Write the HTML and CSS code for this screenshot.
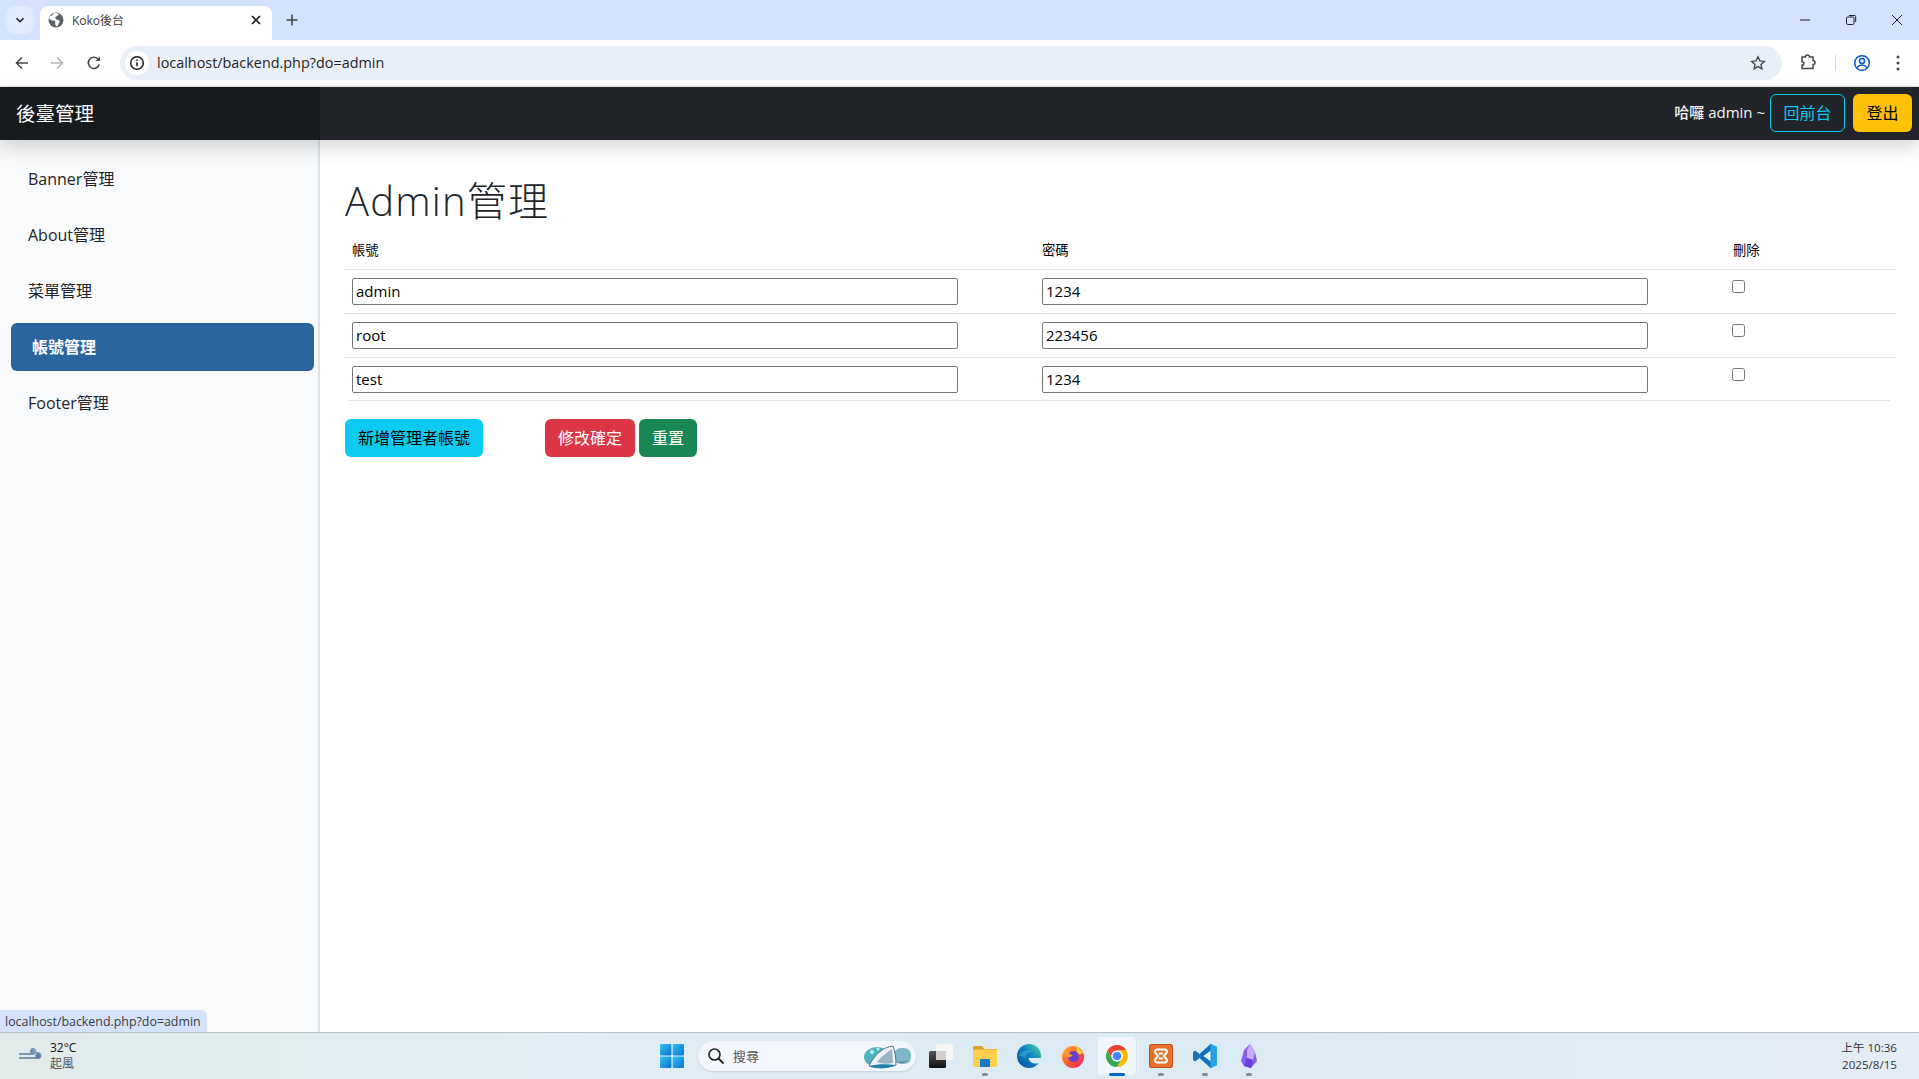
FILE: index.html
```html
<!DOCTYPE html>
<html lang="zh-Hant">
<head>
<meta charset="utf-8">
<title>Koko後台</title>
<link rel="stylesheet" href="styles.css">
</head>
<body>
<div class="window">
  <div class="tabstrip">
    <div class="tablist-btn"><svg width="12" height="12" viewBox="0 0 12 12"><path d="M2.5 4.2 6 7.7l3.5-3.5" fill="none" stroke="#1f1f1f" stroke-width="1.6"/></svg></div>
    <div class="tab">
      <svg class="favicon" width="16" height="16" viewBox="0 0 16 16"><circle cx="8" cy="8" r="7.5" fill="#5f6368"/><path d="M6 1 4 3.500l-2 .5L1 6.500l3 2h2.500l1 1.500-.5 2 1.500 2.500 1.500-1 .5-2 1.500-1.500-1.500-2-2.500-.5L7 5.500 9 4l2-1.500C9.500 1 7.500.7 6 1z" fill="#fff"/></svg>
      <span class="tab-title">Koko後台</span>
      <svg class="tab-close" width="12" height="12" viewBox="0 0 12 12"><path d="M2 2l8 8M10 2l-8 8" stroke="#1f1f1f" stroke-width="1.700"/></svg>
    </div>
    <svg class="newtab" width="14" height="14" viewBox="0 0 14 14"><path d="M7 1.500v11M1.500 7h11" stroke="#444746" stroke-width="1.600"/></svg>
    <div class="winctl">
      <svg width="14" height="14" viewBox="0 0 14 14"><path d="M2 7h10" stroke="#1f1f1f" stroke-width="1"/></svg>
      <svg width="14" height="14" viewBox="0 0 14 14"><rect x="2.500" y="4" width="7.500" height="7.500" rx="1.200" fill="none" stroke="#1f1f1f"/><path d="M5 2.500h5.500a1.200 1.200 0 0 1 1.200 1.200V9" fill="none" stroke="#1f1f1f"/></svg>
      <svg width="14" height="14" viewBox="0 0 14 14"><path d="M2 2l10 10M12 2 2 12" stroke="#1f1f1f" stroke-width="1"/></svg>
    </div>
  </div>
  <div class="toolbar">
    <svg class="tb-back" width="16" height="16" viewBox="0 0 16 16"><path d="M14 8H2.500M8 2.500 2.500 8 8 13.500" fill="none" stroke="#474747" stroke-width="1.600"/></svg>
    <svg class="tb-fwd" width="16" height="16" viewBox="0 0 16 16"><path d="M2 8h11.500M8 2.500 13.500 8 8 13.500" fill="none" stroke="#b4b4b4" stroke-width="1.600"/></svg>
    <svg class="tb-reload" width="16" height="16" viewBox="0 0 16 16"><path d="M13.300 9.500A5.600 5.600 0 1 1 12 4" fill="none" stroke="#474747" stroke-width="1.600"/><path d="M14 1.500V6H9.500z" fill="#474747"/></svg>
    <div class="omnibox">
      <span class="omni-info"><svg width="16" height="16" viewBox="0 0 16 16"><circle cx="8" cy="8" r="6.300" fill="none" stroke="#1f1f1f" stroke-width="1.500"/><path d="M8 7.200v4M8 4.500v1.400" stroke="#1f1f1f" stroke-width="1.500"/></svg></span>
      <span class="omni-url">localhost/backend.php?do=admin</span>
      <svg class="omni-star" width="16" height="16" viewBox="0 0 16 16"><path d="M8 1.800l1.900 4.100 4.400.5-3.300 3 .9 4.400L8 11.600l-3.900 2.200.9-4.400-3.300-3 4.400-.5z" fill="none" stroke="#474747" stroke-width="1.400"/></svg>
    </div>
    <svg class="tb-ext" width="18" height="18" viewBox="0 0 18 18"><path d="M3 3.500h3.500a2 2 0 0 1 4 0H14v3.500a2 2 0 0 1 0 4V15H3v-3.200a1.800 1.800 0 0 0 0-3.600V3.500z" transform="translate(0 -.5)" fill="none" stroke="#474747" stroke-width="1.500"/></svg>
    <span class="tb-divider"></span>
    <svg class="tb-profile" width="18" height="18" viewBox="0 0 18 18"><circle cx="9" cy="9" r="7.300" fill="none" stroke="#0b57d0" stroke-width="1.500"/><circle cx="9" cy="7" r="2.500" fill="none" stroke="#0b57d0" stroke-width="1.500"/><path d="M4 13.500c1.500-2 3-2.500 5-2.500s3.500.5 5 2.500" fill="none" stroke="#0b57d0" stroke-width="1.500"/></svg>
    <svg class="tb-menu" width="4" height="16" viewBox="0 0 4 16"><circle cx="2" cy="2" r="1.500" fill="#474747"/><circle cx="2" cy="8" r="1.500" fill="#474747"/><circle cx="2" cy="14" r="1.500" fill="#474747"/></svg>
  </div>

  <header class="topnav">
    <a class="brand">後臺管理</a>
    <div class="nav-right">
      <span class="hello">哈囉 admin ~</span>
      <a class="btn btn-outline-info">回前台</a>
      <a class="btn btn-warning">登出</a>
    </div>
  </header>

  <div class="page">
    <nav class="sidebar">
      <a class="side-link">Banner管理</a>
      <a class="side-link">About管理</a>
      <a class="side-link">菜單管理</a>
      <a class="side-link active">帳號管理</a>
      <a class="side-link">Footer管理</a>
    </nav>
    <main class="main">
      <h1 class="title">Admin管理</h1>
      <table class="table">
        <thead><tr><th class="c1">帳號</th><th class="c2">密碼</th><th class="c3">刪除</th></tr></thead>
        <tbody>
          <tr><td><input class="field" value="admin"></td><td><input class="field" value="1234"></td><td><input class="check" type="checkbox"></td></tr>
          <tr><td><input class="field" value="root"></td><td><input class="field" value="223456"></td><td><input class="check" type="checkbox"></td></tr>
          <tr class="last"><td><input class="field" value="test"></td><td><input class="field" value="1234"></td><td><input class="check" type="checkbox"></td></tr>
        </tbody>
      </table>
      <div class="table-end"></div>
      <div class="actions">
        <a class="btn btn-info">新增管理者帳號</a>
        <a class="btn btn-danger">修改確定</a>
        <a class="btn btn-success">重置</a>
      </div>
    </main>
    <div class="status">localhost/backend.php?do=admin</div>
  </div>

  <footer class="taskbar">
    <div class="weather">
      <svg width="24" height="16" viewBox="0 0 24 16"><path d="M0 7h14a2.500 2.500 0 1 0-2-4M0 11h19a2.500 2.500 0 1 0-2-4" transform="translate(0 -1)" fill="none" stroke="#7d97b3" stroke-width="1.800"/><circle cx="19" cy="8" r="2.600" fill="#5c7fa6"/><circle cx="13" cy="3.500" r="2.200" fill="#6e8fb3"/></svg>
      <div class="weather-text"><span class="temp">32°C</span><span class="cond">起風</span></div>
    </div>
    <div class="tray">
      <svg class="start" width="24" height="24" viewBox="0 0 24 24"><defs><linearGradient id="w" x1="0" y1="0" x2="1" y2="1"><stop offset="0" stop-color="#32c3f5"/><stop offset="1" stop-color="#0a6fd0"/></linearGradient></defs><rect x="0" y="0" width="11.400" height="11.400" rx="1" fill="url(#w)"/><rect x="12.600" y="0" width="11.400" height="11.400" rx="1" fill="url(#w)"/><rect x="0" y="12.600" width="11.400" height="11.400" rx="1" fill="url(#w)"/><rect x="12.600" y="12.600" width="11.400" height="11.400" rx="1" fill="url(#w)"/></svg>
      <div class="search">
        <svg width="18" height="18" viewBox="0 0 18 18"><circle cx="7.500" cy="7.500" r="5.500" fill="none" stroke="#222" stroke-width="1.600"/><path d="M11.500 11.500l5 5" stroke="#222" stroke-width="1.800"/></svg>
        <span class="search-text">搜尋</span>
        <svg class="whale" width="48" height="28" viewBox="0 0 48 28"><ellipse cx="13" cy="15" rx="13" ry="10" fill="#4fb5bd"/><rect x="30" y="6" width="17" height="16" rx="7" fill="#7db9c4"/><path d="M5 24C10 13 19 5 29 4c2 5 3 11 3 19-8 3-18 4-27 1z" fill="#eef2f5" stroke="#3d5566" stroke-width=".8"/><path d="M13 20c5-6 10-10 15-13l1 14c-6 1-11 1-16-1z" fill="#9db4c2"/><path d="M5 24c8-2 18-2 27-1-7 4-20 4-27 1z" fill="#1f7fae"/><path d="M31 20l16-1-9 2z" fill="#55808f"/><circle cx="8" cy="10" r="2" fill="#bfeef0"/><circle cx="14" cy="7" r="1.500" fill="#bfeef0"/></svg>
      </div>
      <div class="apps">
        <span class="app"><svg width="24" height="24" viewBox="0 0 24 24"><defs><linearGradient id="tv" x1="0" y1="0" x2="0" y2="1"><stop offset="0" stop-color="#555"/><stop offset="1" stop-color="#111"/></linearGradient></defs><rect x="7" y="0" width="17" height="16" rx="1.500" fill="#f6f6f6"/><rect x="0" y="7" width="17" height="17" rx="1.500" fill="url(#tv)"/><rect x="7" y="7" width="10" height="9" fill="#d0d0d0"/></svg></span>
        <span class="app dot"><svg width="24" height="24" viewBox="0 0 24 24"><path d="M0 3.500A1.500 1.500 0 0 1 1.500 2H9l2.500 3H24v3H0z" fill="#e0a21e"/><rect x="0" y="5.500" width="24" height="17.500" rx="1.500" fill="#fcd04f"/><rect x="7" y="15" width="10" height="8" rx="1" fill="#1379c9"/></svg></span>
        <span class="app"><svg width="24" height="24" viewBox="0 0 24 24"><defs><linearGradient id="ed" x1="0" y1="1" x2="1" y2="0"><stop offset="0" stop-color="#0a4f96"/><stop offset=".55" stop-color="#0f82ca"/><stop offset="1" stop-color="#4fdc8f"/></linearGradient></defs><circle cx="12" cy="12" r="12" fill="url(#ed)"/><path d="M24 14H11.500c.5 3.500 3.500 5.500 7 5.500 2 0 3.500-.5 5-1.500z" fill="#deecf4"/><path d="M8 15c0-5 4-8 8-7-5-3-12-1-15 5 3-2 5-1 7 2z" fill="#5be0c0" opacity=".35"/></svg></span>
        <span class="app"><svg width="24" height="24" viewBox="0 0 24 24"><defs><linearGradient id="ff" x1="0" y1="0" x2="1" y2="1"><stop offset="0" stop-color="#ffbd2e"/><stop offset=".5" stop-color="#ff5a2b"/><stop offset="1" stop-color="#e3226b"/></linearGradient></defs><circle cx="12" cy="13" r="11" fill="url(#ff)"/><path d="M15 0c1 4 5 5 7 9l-6 2z" fill="#ffcf3a"/><circle cx="12.500" cy="12.500" r="5.500" fill="#6a3fd0"/><path d="M2 9c2-3 5-2 6 0s4 2 4 2-2 3-5 2z" fill="#ff9b26"/></svg></span>
        <span class="app current"><svg width="24" height="24" viewBox="0 0 24 24"><path d="M2.470 6.500A11 11 0 0 1 21.530 6.500H12A5.500 5.500 0 0 0 7.240 14.750z" fill="#ea4335"/><path d="M21.530 6.500A11 11 0 0 1 12 23L16.760 14.750A5.500 5.500 0 0 0 12 6.500z" fill="#fbbc04"/><path d="M12 23A11 11 0 0 1 2.470 6.500L7.240 14.750A5.500 5.500 0 0 0 16.760 14.750z" fill="#34a853"/><circle cx="12" cy="12" r="5.500" fill="#fff"/><circle cx="12" cy="12" r="4.300" fill="#4285f4"/></svg></span>
        <span class="app dot"><svg width="24" height="24" viewBox="0 0 24 24"><rect x="0" y="0" width="24" height="24" rx="2.500" fill="#e8702a"/><rect x=".5" y=".5" width="23" height="23" rx="2.500" fill="none" stroke="#b9531a"/><path d="M8 5.500h8a2 2 0 0 1 1.500 3.300L15 12l2.500 3.200A2 2 0 0 1 16 18.500H8a2 2 0 0 1-1.500-3.300L9 12 6.500 8.800A2 2 0 0 1 8 5.500zM10 9.500h4M10 14.500h4" fill="none" stroke="#fff" stroke-width="2.200"/></svg></span>
        <span class="app dot"><svg width="24" height="24" viewBox="0 0 24 24"><path d="M17.500 0 24 3v18l-6.500 3L6.500 14 2 17.500 0 16V8l2-1.500L6.500 10z" fill="#0e74bd"/><path d="M17.500 0 24 3v18l-6.500 3z" fill="#27a0e8"/><path d="M17.500 6.800v10.400L10.500 12z" fill="#eef7fd"/></svg></span>
        <span class="app dot"><svg width="24" height="24" viewBox="0 0 24 24"><path d="M13 0l5 8 2 9-6 7-7-2-3-5 3-11z" fill="#8a5cf0"/><path d="M13 0l5 8-2 8-6-2 0-8z" fill="#c6aef6"/><path d="M10 14l6 2-2 8-7-2z" fill="#6c3fd6"/></svg></span>
      </div>
    </div>
    <div class="clock"><span>上午 10:36</span><span>2025/8/15</span></div>
  </footer>
</div>
</body>
</html>
```
FILE: styles.css
```css
* { box-sizing: border-box; }
html, body { margin: 0; padding: 0; height: 100%; overflow: hidden; }
body { font-family: "Open Sans", "Noto Sans CJK TC", sans-serif; color: #212529; background: #fff; }
.window { height: 1079px; display: flex; flex-direction: column; }

.tabstrip { height: 40px; background: #d3e3fd; display: flex; align-items: flex-start; position: relative; flex: none; }
.tablist-btn { width: 28px; height: 28px; margin: 6px 0 0 6px; background: #e0eafb; border-radius: 8px; display: flex; align-items: center; justify-content: center; }
.tab { width: 232px; height: 34px; margin: 6px 0 0 6px; background: #fff; border-radius: 8px 8px 0 0; display: flex; align-items: center; padding: 0 10px 6px 8px; }
.favicon { flex: none; }
.tab-title { font-size: 12px; color: #3c3c3c; margin-left: 8px; flex: 1; }
.newtab { margin: 13px 0 0 13px; }
.winctl { margin-left: auto; display: flex; gap: 32px; padding: 13px 15px 0 0; }

.toolbar { height: 47px; background: #fff; border-bottom: 1px solid #e3e3e3; border-radius: 8px 8px 0 0; display: flex; align-items: center; flex: none; margin-top: 0; padding-bottom: 1px; }
.tb-back { margin-left: 14px; }
.tb-fwd { margin-left: 19px; }
.tb-reload { margin-left: 21px; }
.omnibox { margin-left: 18px; width: 1662px; height: 34px; border-radius: 17px; background: #e9eff9; display: flex; align-items: center; padding: 0 16px 0 5px; }
.omni-info { width: 24px; height: 24px; border-radius: 50%; background: #fff; display: flex; align-items: center; justify-content: center; }
.omni-url { font-size: 14.4px; color: #1f1f1f; margin-left: 8px; flex: 1; }
.tb-ext { margin-left: 17px; }
.tb-divider { width: 1px; height: 16px; background: #c7d7f0; margin-left: 18px; }
.tb-profile { margin-left: 17px; }
.tb-menu { margin-left: 25px; }

.topnav { height: 53px; flex: none; background: #212529; display: flex; align-items: flex-start; position: relative; z-index: 2; box-shadow: 0 8px 16px rgba(0,0,0,.15); }
.brand { width: 320px; height: 100%; background: #181b1e; border-right: 1px solid #15181b; color: #fff; font-size: 19.5px; display: flex; align-items: center; padding: 0 0 3px 16px; }
.nav-right { margin-left: auto; display: flex; align-items: center; padding: 7px 7px 0 0; }
.hello { color: #f4f4f4; font-size: 15px; font-weight: 500; margin-right: 5px; padding-bottom: 3px; }
.btn { display: inline-flex; align-items: center; justify-content: center; height: 38px; padding: 0 12px 2px; border: 1px solid transparent; border-radius: 6px; font-size: 16px; }
.btn-outline-info { color: #0dcaf0; border-color: #0dcaf0; margin-right: 8px; width: 75px; }
.btn-warning { background: #ffc107; color: #000; width: 59px; }
.btn-info { background: #0dcaf0; color: #000; }
.btn-danger { background: #dc3545; color: #fff; margin-left: 62px; }
.btn-success { background: #198754; color: #fff; margin-left: 4px; }

.page { flex: 1; display: flex; position: relative; min-height: 0; }
.sidebar { width: 320px; flex: none; background: #f8f9fa; border-right: 2px solid #dee2e6; padding: 15px 4px 0 11px; display: flex; flex-direction: column; gap: 8px; }
.side-link { height: 48px; display: flex; align-items: center; font-size: 16px; color: #212529; padding: 0 0 2px 17px; border-radius: 6px; }
.side-link.active { background: #2b659f; color: #fff; font-weight: 600; padding-left: 21px; }

.main { flex: 1; padding: 17px 23px 0 24px; min-width: 0; }
.title { font-size: 40px; font-weight: 300; line-height: 1.2; letter-spacing: 1.2px; margin: 20px 0 6px; padding-left: 1px; color: #212529; }
.table { width: 1552px; border-collapse: collapse; table-layout: fixed; }
.c1 { width: 690px; }
.c2 { width: 691px; }
.table th { font-size: 13.33px; font-weight: 400; color: #000; text-align: left; padding: 8px; height: 38px; }
.table td { padding: 8px; vertical-align: top; height: 44px; }
.table tr { border-bottom: 1px solid #dee2e6; }
.table tr.last { border-bottom: 0; }
.table-end { height: 1px; background: #dee2e6; margin: -1px 6px 0 5px; position: relative; }
.field { display: block; width: 606px; height: 27px; font: 15px/21px "Open Sans", "Noto Sans CJK TC", sans-serif; color: #000; border: 1px solid #767676; border-radius: 2px; padding: 1px 3px; background: #fff; }
.check { display: block; width: 13px; height: 13px; margin: 2px 0 0 -1px; }
.actions { display: flex; margin-top: 18px; padding-left: 1px; }

.status { position: absolute; left: 0; bottom: 0; height: 22px; width: 207px; background: #d3e3fd; border-radius: 0 6px 0 0; font-size: 12.4px; line-height: 24px; color: #3c3c3c; padding-left: 5px; }

.taskbar { height: 47px; flex: none; border-top: 1px solid #b9bfc4; background: linear-gradient(90deg, #e0ebe9 0%, #e2edf5 30%, #dbeaf3 60%, #e4ecf5 100%); display: flex; align-items: center; color: #111; }
.weather { width: 660px; display: flex; align-items: center; padding-left: 19px; gap: 7px; flex: none; }
.weather-text { display: flex; flex-direction: column; font-size: 12px; line-height: 16px; }
.temp { color: #111; }
.cond { color: #555; }
.tray { display: flex; align-items: center; }
.start { flex: none; }
.search { width: 218px; height: 30px; border-radius: 15px; background: #f3f7fb; margin-left: 14px; display: flex; align-items: center; padding: 0 4px 0 9px; box-shadow: 0 1px 2px rgba(0,0,0,.12); }
.search-text { font-size: 13px; color: #555; margin: 0 0 2px 8px; flex: 1; }
.apps { display: flex; margin-left: 3px; }
.app { width: 38px; height: 38px; margin: 0 3px; display: flex; align-items: center; justify-content: center; position: relative; border-radius: 4px; }
.app.dot::after { content: ""; position: absolute; left: 16px; bottom: -1px; width: 6px; height: 3px; border-radius: 2px; background: #868a8e; }
.app.current { background: #f0f6fb; box-shadow: 1px 0 0 #d5dfe8, 3px 0 0 #e8f0f6; }
.app.current::after { content: ""; position: absolute; left: 11px; bottom: -1px; width: 16px; height: 3px; border-radius: 2px; background: #0067c0; }
.clock { margin-left: auto; display: flex; flex-direction: column; align-items: flex-end; padding-right: 22px; font-size: 11.6px; line-height: 17px; color: #333; }
```
